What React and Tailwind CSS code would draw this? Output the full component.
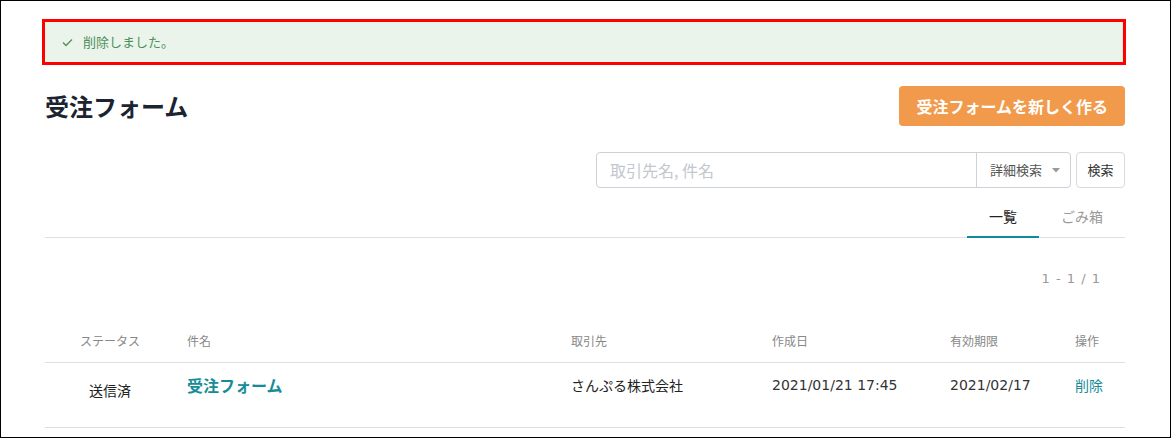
import React from "react";

const font = { fontFamily: '"Noto Sans CJK JP", "Noto Sans", sans-serif' };
const num = { fontFamily: '"DejaVu Sans", "Noto Sans CJK JP", sans-serif' };

export default function App() {
  return (
    <div
      className="w-[1171px] h-[438px] box-border border border-black bg-white overflow-hidden pl-[44px] pr-[45px] text-[#222]"
      style={font}
    >
      {/* alert with red outline */}
      <div className="mt-[18px] ml-[-3px] w-[1084px] h-[46px] box-border border-[3px] border-[#ff0000]">
        <div className="h-full bg-[#eaf4eb] border-r border-[#d9e9dc] flex items-center pl-[17px] text-[13px] text-[#4f8f5c]">
          <svg width="11" height="9" viewBox="0 0 11 9" className="mr-[10px]">
            <path d="M1 4.5 L4 7.5 L10 1.5" fill="none" stroke="#4f8f5c" strokeWidth="1.3" />
          </svg>
          <span>削除しました。</span>
        </div>
      </div>

      {/* title row */}
      <div className="mt-[21px] flex items-center justify-between h-[40px]">
        <h1 className="text-[24px] font-bold text-[#1c2331] leading-none">受注フォーム</h1>
        <button className="h-[40px] px-[17px] rounded-[4px] bg-[#f29a4b] text-white text-[16px] font-bold leading-none">
          受注フォームを新しく作る
        </button>
      </div>

      {/* search row */}
      <div className="mt-[26px] flex justify-end h-[36px]">
        <div className="flex h-[36px] border border-[#cdd0d7] rounded-[4px] box-border">
          <div className="w-[379px] flex items-center pl-[13px] text-[16px] text-[#c3c7cf]">
            取引先名, 件名
          </div>
          <div className="w-[94px] border-l border-[#cdd0d7] flex items-center pl-[13px] text-[13px] text-[#555]">
            詳細検索
            <svg width="8" height="5" viewBox="0 0 8 5" className="ml-[10px]">
              <path d="M0 0 L8 0 L4 4.5 Z" fill="#999" />
            </svg>
          </div>
        </div>
        <button className="ml-[5px] w-[49px] h-[36px] box-border border border-[#d6d9de] rounded-[4px] text-[13px] text-[#333]">
          検索
        </button>
      </div>

      {/* tabs */}
      <div className="mt-[8px] h-[42px] box-border border-b border-[#dcdfe4] flex justify-end">
        <div className="w-[72px] h-[42px] box-border flex items-center justify-center text-[14px] text-[#222] border-b-2 border-[#0f8c98]">
          一覧
        </div>
        <div className="w-[86px] h-[41px] flex items-center justify-center text-[14px] text-[#999]">
          ごみ箱
        </div>
      </div>

      {/* pagination */}
      <div
        className="pt-[32px] flex justify-end pr-[24px] text-[13px] leading-[18px] tracking-[1px] text-[#999]"
        style={num}
      >
        1 - 1 / 1
      </div>

      {/* table */}
      <div className="mt-[31px]">
        <div className="grid grid-cols-[130px_384px_201px_178px_125px_62px] h-[44px] items-center border-b border-[#dcdfe4] text-[12px] text-[#888]">
          <div className="text-center">ステータス</div>
          <div className="pl-[12px]">件名</div>
          <div className="pl-[12px]">取引先</div>
          <div className="pl-[12px]">作成日</div>
          <div className="pl-[12px]">有効期限</div>
          <div className="pl-[12px]">操作</div>
        </div>
        <div className="grid grid-cols-[130px_384px_201px_178px_125px_62px] h-[65px] items-start border-b border-[#dcdfe4] text-[14px] leading-[20px] text-[#222]">
          <div className="text-center pt-[17px]">送信済</div>
          <div className="pl-[12px] pt-[11px] text-[16px] font-bold text-[#168c98] leading-[22px]">受注フォーム</div>
          <div className="pl-[12px] pt-[12px]">さんぷる株式会社</div>
          <div className="pl-[12px] pt-[12px] text-[#333]" style={num}>2021/01/21 17:45</div>
          <div className="pl-[12px] pt-[12px] text-[#333]" style={num}>2021/02/17</div>
          <div className="pl-[12px] pt-[12px] text-[#168c98]">削除</div>
        </div>
      </div>
    </div>
  );
}
